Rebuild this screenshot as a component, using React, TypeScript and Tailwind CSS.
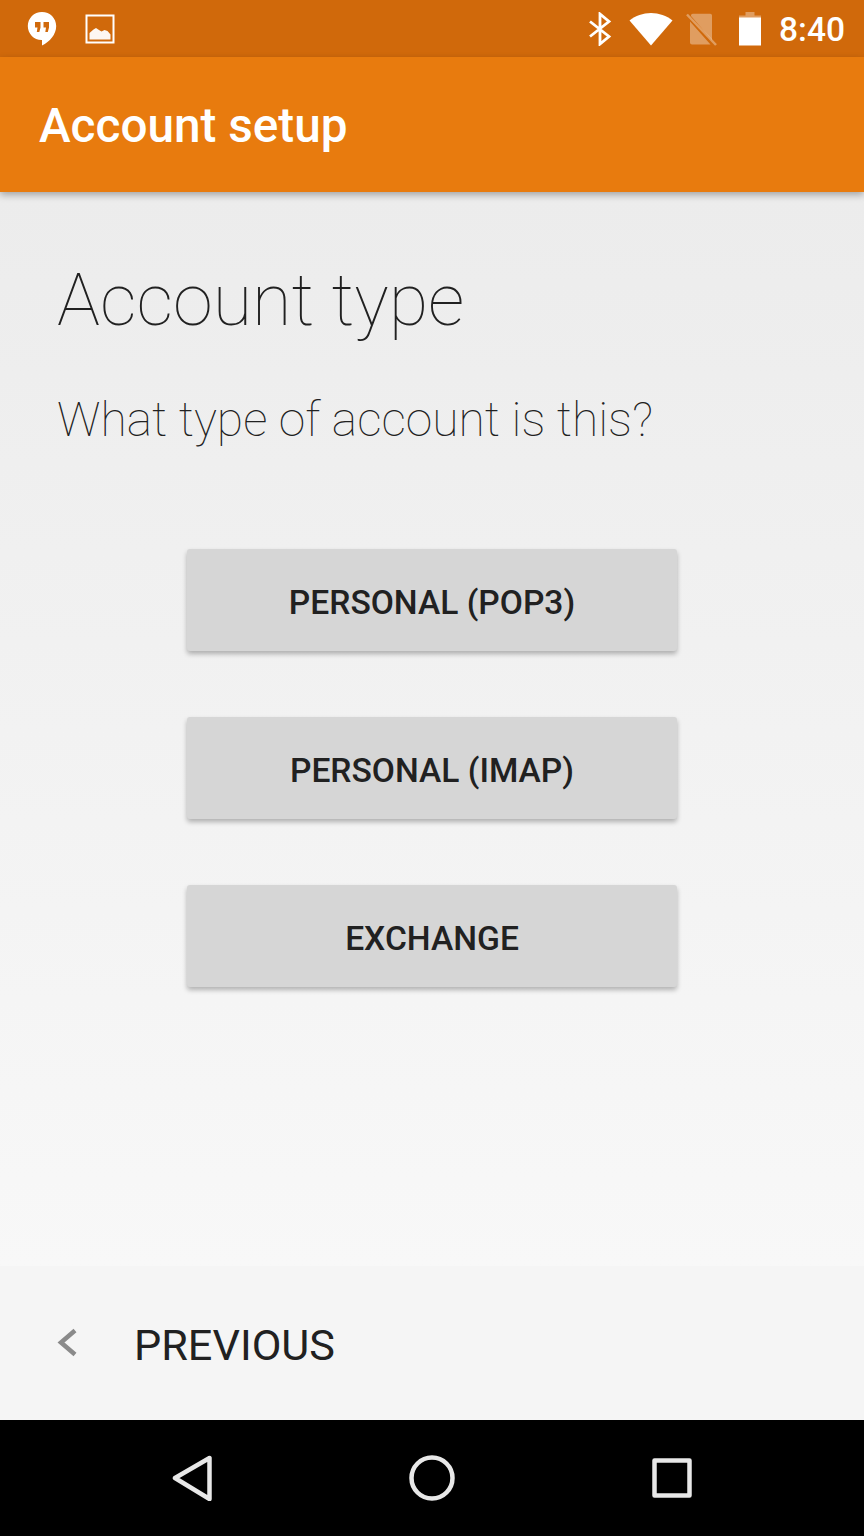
function HangoutsIcon() {
  return (
    <svg width="30" height="35" viewBox="0 0 30 35" className="ml-[27px]">
      <path
        fill="#fff"
        fillRule="evenodd"
        d="M15 1C7 1 .8 7.200.8 15S7 29 14.500 29h.5v5.500C22.800 30.800 29.200 23.500 29.200 15 29.200 7.200 23 1 15 1Z M8 11h5.500v5.500l-1.200 4.500H9.800l.7-4.500H8Z M16.500 11H22v5.500L20.800 21h-2.500l.7-4.500h-2.500Z"
      />
    </svg>
  );
}

function PictureIcon() {
  return (
    <svg width="30" height="30" viewBox="0 0 30 30" className="ml-[28px]">
      <rect x="1.500" y="1.500" width="27" height="27" fill="none" stroke="#fff" strokeWidth="2" />
      <path
        fill="#fff"
        d="M4.500 25.500V19l4-3.500 2.500-1.500 3 2 2.500 1.500 3-1.500 3 1 3 3.500v5Z"
        opacity="0.95"
      />
    </svg>
  );
}

function BluetoothIcon() {
  return (
    <svg width="24" height="34" viewBox="0 0 24 34" fill="none" stroke="#fff" strokeWidth="2.800">
      <path d="M2 9.500 21 24.500 12 32V2l9 7.500L2 24.500" />
    </svg>
  );
}

function WifiIcon() {
  return (
    <svg width="44" height="34" viewBox="0 0 44 34">
      <path fill="#fff" d="M0.500 8.500C6.500 3.800 14 1 22 1s15.500 2.800 21.500 7.500L22 33.500Z" />
    </svg>
  );
}

function NoSimIcon() {
  return (
    <svg width="32" height="34" viewBox="0 0 32 34">
      <path fill="#fff" opacity="0.35" d="M5 3.500c0-1 .8-1.800 1.800-1.800h17.400c1 0 1.800.8 1.800 1.800V28l-21-24Z M4 9.500l20.500 23H6c-1 0-2-1-2-2Z" />
      <path stroke="#fff" strokeOpacity="0.35" strokeWidth="2.500" d="M1 2.500 30 33" />
    </svg>
  );
}

function BatteryIcon() {
  return (
    <svg width="24" height="35" viewBox="0 0 24 35">
      <path fill="#fff" opacity="0.35" d="M7.500 1h9v3.500H23V13H1V4.500h6.500Z" />
      <rect x="1" y="6.500" width="22" height="28" fill="#fff" />
    </svg>
  );
}

function ActionButton({ label }: { label: string }) {
  return (
    <button className="h-[102px] w-[490px] rounded-[3px] bg-[#d6d6d6] pt-[6px] text-[33.6px] font-medium text-[#212121] shadow-[0_3px_5px_rgba(0,0,0,0.28)]">
      {label}
    </button>
  );
}

export default function App() {
  return (
    <div className="flex h-[1536px] w-[864px] flex-col overflow-hidden bg-[#f5f5f5] font-['Roboto',sans-serif]">
      {/* Status bar */}
      <div className="flex h-[57px] shrink-0 items-center bg-[#d0690b]">
        <HangoutsIcon />
        <PictureIcon />
        <div className="ml-auto flex items-center pr-[19px]">
          <BluetoothIcon />
          <div className="ml-[17px]"><WifiIcon /></div>
          <div className="ml-[13px]"><NoSimIcon /></div>
          <div className="ml-[20px]"><BatteryIcon /></div>
          <span className="ml-[17px] pt-[3px] text-[33.500px] leading-none font-medium text-white">8:40</span>
        </div>
      </div>

      {/* Toolbar */}
      <div className="z-10 flex h-[135px] shrink-0 items-center bg-[#e87b0e] pl-[39px] pt-[5px] shadow-[0_3px_7px_rgba(0,0,0,0.3)]">
        <h1 className="text-[47.700px] leading-none font-medium text-white">Account setup</h1>
      </div>

      {/* Content */}
      <div className="flex flex-1 flex-col bg-gradient-to-b from-[#ececec] to-[#f8f8f8] pt-[67px]">
        <h2 className="pl-[57px] text-[72px] leading-[84px] font-thin text-[#212121]">Account type</h2>
        <p className="mt-[49px] pl-[57px] text-[48px] leading-[56px] font-thin text-[#212121]">What type of account is this?</p>
        <div className="mt-[101px] flex flex-col items-center gap-[66px]">
          <ActionButton label="PERSONAL (POP3)" />
          <ActionButton label="PERSONAL (IMAP)" />
          <ActionButton label="EXCHANGE" />
        </div>
      </div>

      {/* Footer */}
      <div className="flex h-[154px] shrink-0 items-center bg-[#f5f5f5] pl-[57px]">
        <svg width="20" height="30" viewBox="0 0 20 30" fill="none" stroke="#8a8a8a" strokeWidth="4.500">
          <path d="M18 2.500 4 14.500l14 12" />
        </svg>
        <span className="ml-[57px] pt-[5px] text-[43.200px] leading-none text-[#212121]">PREVIOUS</span>
      </div>

      {/* Navigation bar */}
      <div className="flex h-[116px] shrink-0 items-center bg-black">
        <svg width="40" height="46" viewBox="0 0 40 46" className="ml-[172px]" fill="none" stroke="#e8e8e8" strokeWidth="4.500" strokeLinejoin="round">
          <path d="M3 23 37.500 3v41Z" />
        </svg>
        <svg width="46" height="46" viewBox="0 0 46 46" className="ml-[197px]" fill="none" stroke="#e8e8e8" strokeWidth="4.500">
          <circle cx="23" cy="23" r="20.500" />
        </svg>
        <svg width="40" height="40" viewBox="0 0 40 40" className="ml-[197px]" fill="none" stroke="#e8e8e8" strokeWidth="4.500" strokeLinejoin="round">
          <rect x="2.500" y="2.500" width="35" height="35" />
        </svg>
      </div>
    </div>
  );
}
